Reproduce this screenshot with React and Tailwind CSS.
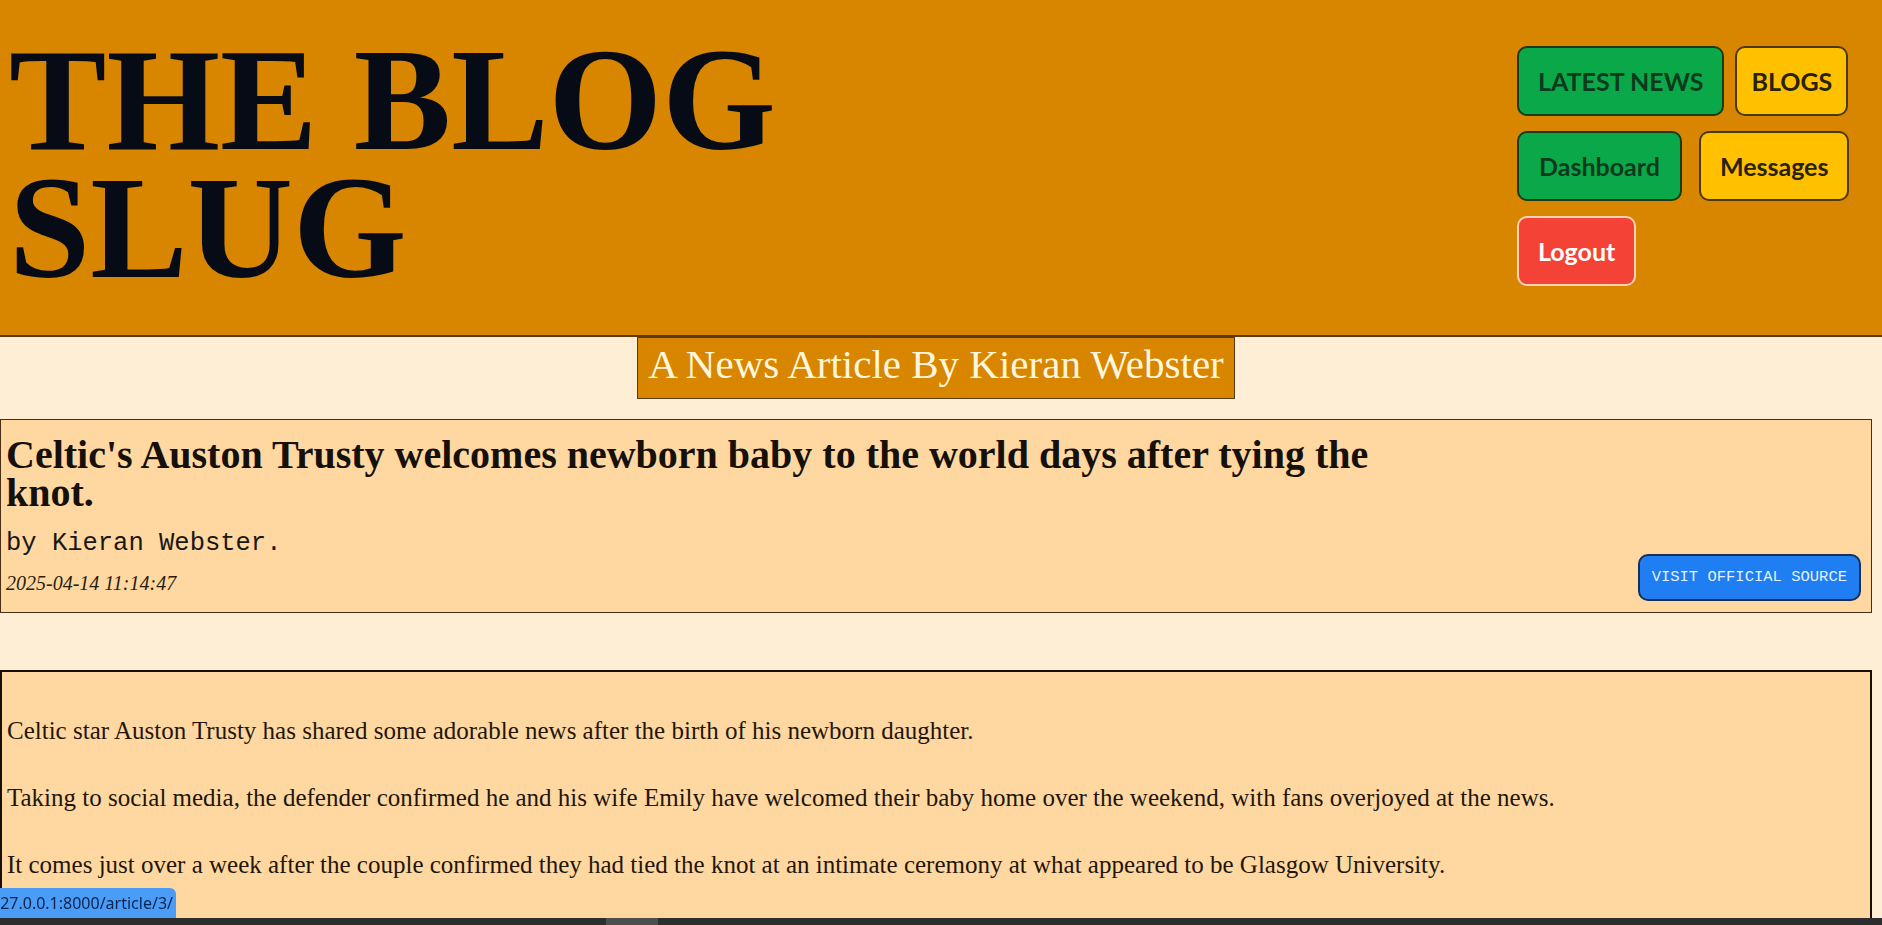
import React from "react";

const serif = { fontFamily: '"Liberation Serif", "Times New Roman", serif' };
const mono = { fontFamily: '"Liberation Mono", "DejaVu Sans Mono", monospace' };

const navBtn =
  "rounded-[10px] border-2 py-[18px] text-[25px] leading-[30px] font-bold whitespace-nowrap";

export default function App() {
  return (
    <div className="min-h-screen bg-[#FFEED6] overflow-hidden relative">
      {/* Header */}
      <header className="flex h-[337px] bg-[#D88600] border-b-2 border-[#5A3A12]">
        <div className="flex-1 pl-[9px] pt-[36px]">
          <h1
            className="max-w-[820px] text-[146px] leading-[128px] font-bold text-[#060B16]"
            style={serif}
          >
            THE BLOG SLUG
          </h1>
        </div>
        <nav
          className="w-[365px] pt-[46px] flex flex-col gap-[15px]"
          style={{ fontFamily: 'Lato, "Open Sans", sans-serif' }}
        >
          <div className="flex gap-[11px]">
            <a className={`${navBtn} px-[19px] bg-[#0BA84A] border-[#1F3A16] text-[#0B3A1C]`}>LATEST NEWS</a>
            <a className={`${navBtn} px-[14px] bg-[#FFC000] border-[#4A3810] text-[#2A2208]`}>BLOGS</a>
          </div>
          <div className="flex gap-[17px]">
            <a className={`${navBtn} px-[20px] bg-[#0BA84A] border-[#1F3A16] text-[#0B3A1C]`}>Dashboard</a>
            <a className={`${navBtn} px-[19px] bg-[#FFC000] border-[#4A3810] text-[#2A2208]`}>Messages</a>
          </div>
          <div className="flex">
            <a className={`${navBtn} px-[19px] bg-[#F44336] border-[#FFD2B4] text-white`}>Logout</a>
          </div>
        </nav>
      </header>

      <main className="w-[1872px]">
        {/* Section label */}
        <div className="flex justify-center">
          <h2
            className="bg-[#D88600] border border-[#5A3A12] px-[10px] pt-[4px] pb-[11px] text-[41px] leading-[45px] text-[#FFF6DE]"
            style={serif}
          >
            A News Article By Kieran Webster
          </h2>
        </div>

        {/* Article heading */}
        <div className="mt-[20px] flex items-end justify-between bg-[#FFD8A1] border border-[#4A2E14]">
          <div className="pl-[5px] pt-[16px] pb-[17px]">
            <h3
              className="max-w-[1430px] text-[40px] leading-[38px] font-bold text-[#15100A]"
              style={serif}
            >
              Celtic's Auston Trusty welcomes newborn baby to the world days after tying the knot.
            </h3>
            <p className="mt-[17px] text-[25.5px] leading-[30px] text-[#1A1712]" style={mono}>
              by Kieran Webster.
            </p>
            <p className="mt-[12px] text-[20px] leading-[24px] italic text-[#2A1C0E]" style={serif}>
              2025-04-14 11:14:47
            </p>
          </div>
          <a
            className="mr-[10px] mb-[11px] rounded-[10px] border-2 border-[#1A2E5A] bg-[#1E7EF2] px-[12px] py-[11px] text-[15.5px] leading-[21px] text-[#E2F1FF] whitespace-nowrap"
            style={mono}
          >
            VISIT OFFICIAL SOURCE
          </a>
        </div>

        {/* Article body */}
        <div
          className="mt-[57px] bg-[#FFD8A1] border-2 border-[#1A0D05] pl-[5px] pt-[44px] pb-[120px] text-[25px] leading-[30px] text-[#22160B] flex flex-col gap-[37px]"
          style={serif}
        >
          <p>Celtic star Auston Trusty has shared some adorable news after the birth of his newborn daughter.</p>
          <p>
            Taking to social media, the defender confirmed he and his wife Emily have welcomed their baby home over the
            weekend, with fans overjoyed at the news.
          </p>
          <p>
            It comes just over a week after the couple confirmed they had tied the knot at an intimate ceremony at what
            appeared to be Glasgow University.
          </p>
        </div>
      </main>

      {/* browser status bubble + bottom bar */}
      <div className="fixed left-0 bottom-[7px] h-[30px] w-[176px] overflow-hidden rounded-tr-[6px] bg-[#4A9CF6]">
        <span
          className="block ml-[-9px] text-[16px] leading-[30px] text-[#0C2450] whitespace-nowrap"
          style={{ fontFamily: '"Noto Sans", "Open Sans", sans-serif' }}
        >
          127.0.0.1:8000/article/3/
        </span>
      </div>
      <div className="fixed left-0 right-0 bottom-0 h-[7px] bg-[#2D2D2D]">
        <div className="ml-[606px] w-[52px] h-full bg-[#4E4E4E]" />
      </div>
    </div>
  );
}
